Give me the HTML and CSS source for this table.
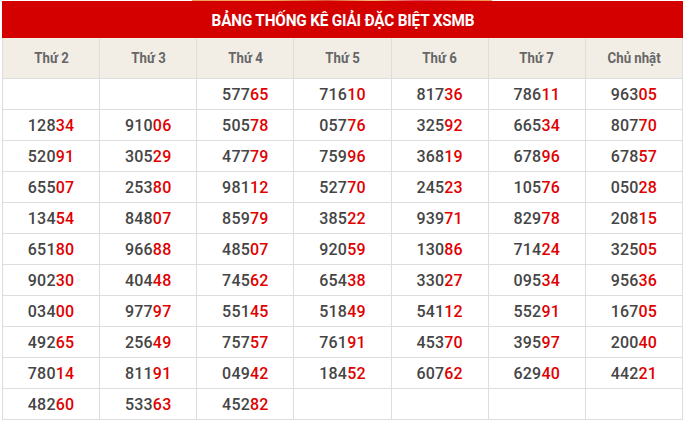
FILE: index.html
```html
<!DOCTYPE html>
<html lang="vi">
<head>
<meta charset="utf-8">
<title>Bảng thống kê giải đặc biệt XSMB</title>
<link rel="stylesheet" href="styles.css">
</head>
<body>
<div class="banner-strip"><span class="strip-img"></span></div>
<table class="stats">
  <thead>
    <tr><th class="title" colspan="7"><span class="title-text">BẢNG THỐNG KÊ GIẢI ĐẶC BIỆT XSMB</span></th></tr>
    <tr class="days">
      <th><span class="cond">Thứ 2</span></th>
      <th><span class="cond">Thứ 3</span></th>
      <th><span class="cond">Thứ 4</span></th>
      <th><span class="cond">Thứ 5</span></th>
      <th><span class="cond">Thứ 6</span></th>
      <th><span class="cond">Thứ 7</span></th>
      <th><span class="cond">Chủ nhật</span></th>
    </tr>
  </thead>
  <tbody>
    <tr><td></td><td></td><td>577<b>65</b></td><td>716<b>10</b></td><td>817<b>36</b></td><td>786<b>11</b></td><td>963<b>05</b></td></tr>
    <tr><td>128<b>34</b></td><td>910<b>06</b></td><td>505<b>78</b></td><td>057<b>76</b></td><td>325<b>92</b></td><td>665<b>34</b></td><td>807<b>70</b></td></tr>
    <tr><td>520<b>91</b></td><td>305<b>29</b></td><td>477<b>79</b></td><td>759<b>96</b></td><td>368<b>19</b></td><td>678<b>96</b></td><td>678<b>57</b></td></tr>
    <tr><td>655<b>07</b></td><td>253<b>80</b></td><td>981<b>12</b></td><td>527<b>70</b></td><td>245<b>23</b></td><td>105<b>76</b></td><td>050<b>28</b></td></tr>
    <tr><td>134<b>54</b></td><td>848<b>07</b></td><td>859<b>79</b></td><td>385<b>22</b></td><td>939<b>71</b></td><td>829<b>78</b></td><td>208<b>15</b></td></tr>
    <tr><td>651<b>80</b></td><td>966<b>88</b></td><td>485<b>07</b></td><td>920<b>59</b></td><td>130<b>86</b></td><td>714<b>24</b></td><td>325<b>05</b></td></tr>
    <tr><td>902<b>30</b></td><td>404<b>48</b></td><td>745<b>62</b></td><td>654<b>38</b></td><td>330<b>27</b></td><td>095<b>34</b></td><td>956<b>36</b></td></tr>
    <tr><td>034<b>00</b></td><td>977<b>97</b></td><td>551<b>45</b></td><td>518<b>49</b></td><td>541<b>12</b></td><td>552<b>91</b></td><td>167<b>05</b></td></tr>
    <tr><td>492<b>65</b></td><td>256<b>49</b></td><td>757<b>57</b></td><td>761<b>91</b></td><td>453<b>70</b></td><td>395<b>97</b></td><td>200<b>40</b></td></tr>
    <tr><td>780<b>14</b></td><td>811<b>91</b></td><td>049<b>42</b></td><td>184<b>52</b></td><td>607<b>62</b></td><td>629<b>40</b></td><td>442<b>21</b></td></tr>
    <tr><td>482<b>60</b></td><td>533<b>63</b></td><td>452<b>82</b></td><td></td><td></td><td></td><td></td></tr>
  </tbody>
</table>
</body>
</html>
```

FILE: styles.css
```css
html, body {
  margin: 0;
  padding: 0;
  background: #ffffff;
}

body {
  font-family: Roboto, "Noto Sans", "Liberation Sans", sans-serif;
}

.banner-strip {
  height: 1px;
  display: flex;
  justify-content: center;
}

.strip-img {
  display: block;
  width: 300px;
  height: 1px;
  background: linear-gradient(90deg, #e9a15a 0%, #f3b35a 25%, #d9553a 45%, #f0c070 60%, #e2486a 75%, #f2a050 100%);
}

.stats {
  border-collapse: collapse;
  width: 681px;
  margin-left: 2px;
  table-layout: fixed;
}

.stats th,
.stats td {
  border: 1px solid #dddddd;
  text-align: center;
  padding: 0;
}

.stats th.title {
  background: #d40000;
  border-color: #d40000;
  height: 35px;
  color: #ffffff;
  font-weight: 700;
}

.title-text {
  display: inline-block;
  font-size: 17px;
  letter-spacing: -0.2px;
  transform: scaleX(0.9);
}

.days th {
  background: #f2eee6;
  height: 40px;
  color: #666666;
  font-weight: 700;
  font-size: 15px;
}

.cond {
  display: inline-block;
  transform: scaleX(0.88);
}

.stats td {
  height: 30px;
  font-size: 16px;
  font-weight: 500;
  color: #454545;
  letter-spacing: 0.2px;
}

.stats td b {
  color: #e00000;
  font-weight: 500;
}
```
